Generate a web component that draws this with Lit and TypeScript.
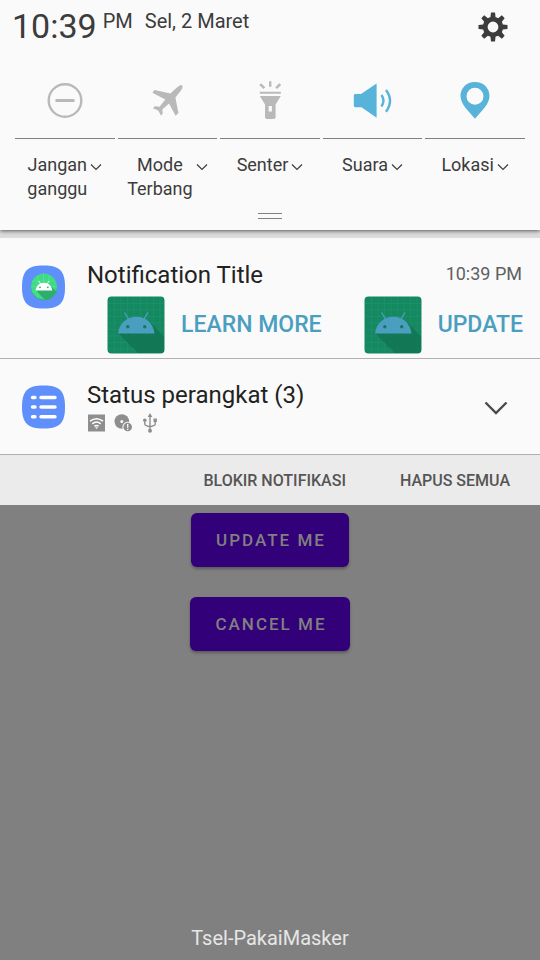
import { LitElement, html, css, svg } from "lit";
import { customElement } from "lit/decorators.js";

const chevron = html`<svg class="chev" viewBox="0 0 12 8" width="12" height="8" aria-hidden="true"><path d="M1 1.5L6 6.5L11 1.5" fill="none" stroke="currentColor" stroke-width="1.2" /></svg>`;

const gearTeeth = [0, 45, 90, 135, 180, 225, 270, 315].map(
  (a) => svg`<path d="M13 0.5h4l.8 7h-5.6z" transform="rotate(${a} 15 15)" />`,
);

const gear = html`<svg viewBox="0 0 30 30" width="30" height="30" fill="#3c3c3c" aria-hidden="true">
  ${gearTeeth}
  <path fill-rule="evenodd" d="M15 4.8a10.2 10.2 0 1 0 0 20.4a10.2 10.2 0 1 0 0-20.4zM15 9.6a5.4 5.4 0 1 1 0 10.8a5.4 5.4 0 1 1 0-10.8z" />
</svg>`;

const minusCircle = html`<svg viewBox="0 0 40 40" width="40" height="40" fill="none" stroke="#b9b9b9" aria-hidden="true">
  <circle cx="20" cy="20.5" r="16.3" stroke-width="2.4" /><path d="M10.5 20.5h19" stroke-width="3" />
</svg>`;

const plane = html`<svg viewBox="0 0 40 40" width="40" height="40" fill="#b9b9b9" aria-hidden="true">
  <path d="M35 5.200c1.200 1.400.2 3.800-1.400 5.800l-5.200 6.400l3 15.600l-2.800 2.800l-6.600-12.400l-6.700 6.100l.5 3.700l-1.700 2.500l-2.900-5.100l-5.300-2.400l1.900-1.900l4.800.4l5.700-7.200l-12.900-6.700l2.200-2.800l15.800 3.400l6.200-5.600c2-1.800 4.300-3.200 5.400-2.600z" />
</svg>`;

const torch = html`<svg viewBox="0 0 40 40" width="40" height="40" fill="#b9b9b9" aria-hidden="true">
  <path d="M19 1.300h2.400v5.400H19zM9.300 4.900l1.800-1.600l4.200 4l-1.800 1.600zM31.200 4.900l-1.800-1.600l-4.200 4l1.800 1.600zM9.800 11.700h21v2h-21z" />
  <path fill-rule="evenodd" d="M9.800 16.100h21l-5.200 8.300v12.600c0 1.300-.6 2-2 2h-6.600c-1.400 0-2-.7-2-2v-12.600zM18.700 26v5.600h3.200v-5.600z" />
</svg>`;

const sound = html`<svg viewBox="0 0 40 40" width="40" height="40" aria-hidden="true">
  <path fill="#57b3d9" d="M.8 16c0-1.500.7-2 2-2h5.200L23.600 3.500v34.300L8.500 27.200H2.800c-1.300 0-2-.6-2-2z" />
  <path fill="none" stroke="#57b3d9" stroke-width="2.400" d="M28.400 15q4.200 5.500 0 11.500M33 10q8 10.500 0 21.800" />
</svg>`;

const pin = html`<svg viewBox="0 0 40 40" width="40" height="40" fill="#57b3d9" aria-hidden="true">
  <path fill-rule="evenodd" d="M20 2C11.500 2 5.500 8.200 5.500 16C5.500 24.500 14 31 20 38.800C26 31 34.500 24.500 34.500 16C34.500 8.200 28.500 2 20 2zM20 7.700a8.500 8.500 0 1 1 0 17a8.500 8.500 0 1 1 0-17z" />
</svg>`;

const gridLines = (from: number, to: number, step: number) => {
  let d = "";
  for (let p = from + step; p < to; p += step) d += `M${p} ${from}V${to}M${from} ${p}H${to}`;
  return d;
};

const droid = html`<svg class="droid" viewBox="0 0 58 58" width="58" height="58" aria-hidden="true">
  <rect x="0.500" y="0.500" width="57" height="57" rx="4" fill="#14895f" />
  <path d="${gridLines(1, 57, 6.5)}" stroke="#1e8f70" stroke-width=".8" fill="none" />
  <path d="M11.500 37.500L31 57H54q3 0 3-3V40.500L44 27z" fill="#127453" fill-opacity=".85" />
  <path d="M11 37.500C12 28 19.500 20.800 29.300 20.800S46.500 28 47.500 37.500z" fill="#4a9fc0" />
  <path d="M17.500 16.500l4.300 7M41 16.500l-4.300 7" stroke="#4a9fc0" stroke-width="1.400" />
  <circle cx="20.800" cy="30.800" r="1.700" fill="#14795a" /><circle cx="37.700" cy="30.800" r="1.700" fill="#14795a" />
</svg>`;

const squircle = svg`<path fill="#5f8ffa" d="M22.500 .5C38.500 .5 44 5.500 44 22S38.500 43.500 22.500 43.500S1 38 1 22S6.500 .5 22.500 .5z" />`;

const appIcon = html`<svg class="badge" viewBox="0 0 44 44" width="44" height="44" aria-hidden="true">
  ${squircle}
  <circle cx="23" cy="22.200" r="13" fill="#2fa572" />
  <circle cx="23" cy="21.500" r="13" fill="#3ddb85" />
  <path d="M17 9.800v23.500M22.500 8.500v26M28 9.800v23.500M11 16h23M10.500 21.500h25M11 27h23" stroke="#6ce2a3" stroke-width=".5" />
  <path d="M15 25.500l8.500 9c6 0 10-3 12-8l-5.500-5z" fill="#2caf6c" />
  <path d="M14.500 25.500c.5-4.600 4-7.800 8.400-7.800s7.900 3.200 8.400 7.800z" fill="#fff" />
  <path d="M17.800 16l2 3M28 16l-2 3" stroke="#fff" stroke-width=".9" />
  <circle cx="19" cy="22.300" r=".9" fill="#2caf6c" /><circle cx="26.800" cy="22.300" r=".9" fill="#2caf6c" />
</svg>`;

const listIcon = html`<svg class="badge" viewBox="0 0 44 44" width="44" height="44" aria-hidden="true">
  ${squircle}
  <path d="M11.500 12.500h2.500M20 12.500h14M11.500 22h2.500M20 22h14M11.500 31.700h2.500M20 31.700h14" stroke="#fff" stroke-width="3.400" stroke-linecap="round" />
</svg>`;

const wifi = html`<svg viewBox="0 0 18 18" width="18" height="18" aria-hidden="true">
  <rect x="1" y=".5" width="17" height="17" fill="#8e8e8e" />
  <path d="M3 7.200q6.500-5 13 0M5.200 9.800q4.300-3.400 8.600 0M7.300 12.200q2.200-1.600 4.400 0" fill="none" stroke="#fff" stroke-width="1.500" />
  <path d="M8 13.300h3L9.500 15z" fill="#fff" />
</svg>`;

const disc = html`<svg viewBox="0 0 18 18" width="18" height="18" aria-hidden="true">
  <circle cx="7.800" cy="7.500" r="7.300" fill="#8e8e8e" /><circle cx="7.800" cy="7.500" r="1.500" fill="#fafafa" />
  <circle cx="13.700" cy="13" r="5.300" fill="#fafafa" /><circle cx="13.700" cy="13" r="4.300" fill="#8e8e8e" />
  <path d="M13.700 10v3.800M13.700 14.700v1.300" stroke="#fafafa" stroke-width="1.300" />
</svg>`;

const usb = html`<svg viewBox="-2 0 18 20" width="18" height="20" aria-hidden="true">
  <path d="M7 2v15M1.800 8.500v2.500q0 1 1 1.300l4.200 1.600l4.200-1.600q1-.3 1-1.300V8" fill="none" stroke="#8e8e8e" stroke-width="1.400" />
  <path d="M7 0L9.300 4H4.700zM10.500 5.500h3.400v3.400h-3.400z" fill="#8e8e8e" />
  <circle cx="1.800" cy="7.300" r="1.800" fill="#8e8e8e" /><circle cx="7" cy="17.800" r="2" fill="#8e8e8e" />
</svg>`;

const toggles = [
  { icon: minusCircle, lines: ["Jangan", "ganggu"], on: false },
  { icon: plane, lines: ["Mode", "Terbang"], on: false },
  { icon: torch, lines: ["Senter"], on: false },
  { icon: sound, lines: ["Suara"], on: true },
  { icon: pin, lines: ["Lokasi"], on: true },
];

@customElement("app-root")
export class AppRoot extends LitElement {
  static styles = css`
    :host {
      display: flex;
      flex-direction: column;
      min-height: 100vh;
      background: #808080;
      font-family: Roboto, "Noto Sans", sans-serif;
      color: #3c3c3c;
    }
    * { box-sizing: border-box; }
    svg { display: block; flex: none; }
    button {
      border: 0;
      padding: 0;
      margin: 0;
      background: none;
      font: inherit;
      color: inherit;
      cursor: pointer;
    }
    .quick {
      background: #fafafa;
      box-shadow: 0 1px 4px rgba(0, 0, 0, 0.6);
      position: relative;
      padding-bottom: 11px;
    }
    .status {
      display: flex;
      align-items: flex-start;
      height: 72px;
      padding: 6px 32px 0 12px;
    }
    .clock { font-size: 34px; line-height: 40px; }
    .meridiem { font-size: 20px; line-height: 30px; margin-left: 6px; }
    .date { font-size: 20px; line-height: 30px; margin-left: 12px; flex: 1; }
    .gear { padding-top: 6px; }
    .toggles {
      display: grid;
      grid-template-columns: repeat(5, 1fr);
      gap: 3px;
      padding: 0 15px;
    }
    .toggle { display: flex; flex-direction: column; }
    .toggle-icon {
      display: flex;
      justify-content: center;
      align-items: center;
      height: 67px;
      padding-bottom: 10px;
      border-bottom: 1px solid #808080;
    }
    .toggle-label {
      display: flex;
      justify-content: center;
      padding-top: 14px;
      font-size: 18px;
      line-height: 24px;
      height: 74px;
    }
    .words { display: flex; flex-direction: column; text-align: center; }
    .chev { margin: 10px 0 0 3px; }
    .handle {
      width: 24px;
      height: 6px;
      margin: 0 auto;
      border: 1px solid #808080;
      border-width: 1px 0;
    }
    .gap { height: 8px; background: #dcdcdc; }
    .card {
      display: flex;
      background: #fafafa;
      border-bottom: 1px solid #b0b0b0;
      padding-left: 21px;
    }
    .card-body { flex: 1; margin-left: 22px; }
    h2 { margin: 0; font-size: 24px; line-height: 28px; font-weight: 400; color: #222; }
    .first { height: 121px; padding-top: 23px; }
    .badge { margin-top: 4px; }
    .head { display: flex; justify-content: space-between; padding-right: 18px; }
    .time { font-size: 18px; line-height: 26px; color: #606060; }
    .actions { display: flex; justify-content: space-between; padding: 7px 17px 0 20px; }
    .action {
      display: flex;
      align-items: center;
      gap: 16px;
      font-size: 23px;
      line-height: 28px;
      font-weight: 500;
      color: #4a9fc0;
    }
    .second { height: 96px; padding-top: 22px; padding-right: 32px; }
    .expand { align-self: flex-start; padding-top: 20px; }
    .mini { display: flex; align-items: center; gap: 9px; padding-top: 4px; }
    .footer {
      display: flex;
      justify-content: flex-end;
      align-items: center;
      gap: 54px;
      height: 50px;
      padding-right: 30px;
      background: #ebebeb;
      color: #555;
      font-size: 16px;
      font-weight: 500;
    }
    .app {
      flex: 1;
      display: flex;
      flex-direction: column;
      align-items: center;
      gap: 30px;
      padding: 8px 0 0;
    }
    .filled {
      height: 54px;
      padding: 0 23px 0 25px;
      border-radius: 6px;
      background: #320078;
      color: #808080;
      font-size: 17px;
      font-weight: 500;
      letter-spacing: 2px;
      box-shadow: 0 2px 3px rgba(0, 0, 0, 0.3);
    }
    .carrier {
      margin-top: auto;
      padding-bottom: 7px;
      font-size: 20px;
      line-height: 30px;
      color: #e6e6e6;
    }
  `;

  render() {
    return html`
      <header class="quick">
        <div class="status">
          <span class="clock">10:39</span>
          <span class="meridiem">PM</span>
          <span class="date">Sel, 2 Maret</span>
          <button class="gear" aria-label="Setelan">${gear}</button>
        </div>
        <div class="toggles">
          ${toggles.map(
            (t) => html`<div class="toggle">
              <button class="toggle-icon" aria-label=${t.lines.join(" ")} aria-pressed=${t.on ? "true" : "false"}>${t.icon}</button>
              <button class="toggle-label">
                <span class="words">${t.lines.map((l) => html`<span>${l}</span>`)}</span>${chevron}
              </button>
            </div>`,
          )}
        </div>
        <div class="handle"></div>
      </header>
      <div class="gap"></div>
      <article class="card first">
        ${appIcon}
        <div class="card-body">
          <div class="head"><h2>Notification Title</h2><span class="time">10:39 PM</span></div>
          <div class="actions">
            <button class="action">${droid}LEARN MORE</button>
            <button class="action">${droid}UPDATE</button>
          </div>
        </div>
      </article>
      <article class="card second">
        ${listIcon}
        <div class="card-body">
          <h2>Status perangkat (3)</h2>
          <div class="mini">${wifi}${disc}${usb}</div>
        </div>
        <button class="expand" aria-label="Luaskan">
          <svg viewBox="0 0 24 14" width="24" height="14" aria-hidden="true"><path d="M1.500 1.500L12 12L22.500 1.500" fill="none" stroke="#4a4a4a" stroke-width="2.400" /></svg>
        </button>
      </article>
      <div class="footer">
        <button>BLOKIR NOTIFIKASI</button>
        <button>HAPUS SEMUA</button>
      </div>
      <main class="app">
        <button class="filled">UPDATE ME</button>
        <button class="filled">CANCEL ME</button>
        <span class="carrier">Tsel-PakaiMasker</span>
      </main>
    `;
  }
}
